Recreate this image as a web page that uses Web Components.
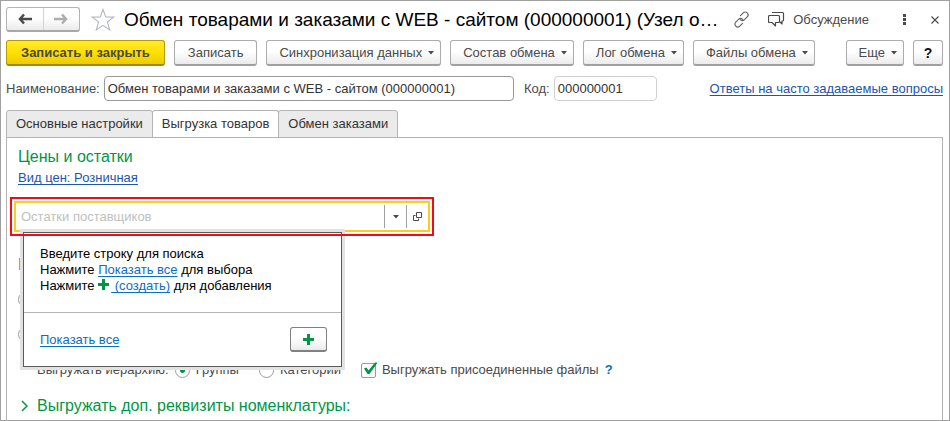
<!DOCTYPE html>
<html lang="ru">
<head>
<meta charset="utf-8">
<title>Обмен товарами и заказами</title>
<style>
  * { box-sizing: border-box; }
  body {
    margin: 0;
    background: #fff;
    color: #4a4a4a;
    font: 13px/16px "Liberation Sans", Arial, sans-serif;
  }
</style>
</head>
<body>
<exchange-form></exchange-form>

<script>
  const base = `
    <style>
      *, :host { box-sizing: border-box; }
      :host { display: block; }
      button, input { font: inherit; color: inherit; margin: 0; }
      svg { display: block; flex: none; }
      a { color: #1c55ae; text-underline-offset: 2px; text-decoration-skip-ink: none; }
    </style>
  `;

  function define(name, html, init) {
    const template = document.createElement('template');
    template.innerHTML = base + html;
    customElements.define(name, class extends HTMLElement {
      constructor() {
        super();
        this.attachShadow({ mode: 'open' });
        this.shadowRoot.appendChild(template.content.cloneNode(true));
      }
      connectedCallback() {
        if (init) init(this, this.shadowRoot);
      }
    });
  }

  const icons = {
    back: '<svg width="14" height="12" viewBox="0 0 14 12"><path d="M6 1.500 2 6l4 4.500M2 6h12" fill="none" stroke="#4a4a4a" stroke-width="2.500"/></svg>',
    forward: '<svg width="14" height="12" viewBox="0 0 14 12"><path d="M8 1.500 12 6l-4 4.500M12 6H0" fill="none" stroke="#adadad" stroke-width="2.500"/></svg>',
    star: '<svg width="24" height="24" viewBox="0 0 24 24"><path d="m12 1.500 2.700 7.400 8 .2-6.300 4.900 2.300 8-6.700-4.600L5.300 22l2.300-8L1.300 9.100l8-.2z" fill="#fff" stroke="#b4b9bf" stroke-width="1.100"/></svg>',
    link: '<svg width="17" height="17" viewBox="0 0 17 17"><g fill="none" stroke="#666" stroke-width="1.200" stroke-linecap="round"><path d="m7.500 4.600 2.700-2.700c1.200-1.200 2.800-1.200 4 0s1.200 2.800 0 4L11.500 8.600c-1.200 1.200-2.900 1.200-4.100 0"/><path d="m9.500 12.400-2.700 2.700c-1.200 1.200-2.800 1.200-4 0s-1.200-2.800 0-4l2.700-2.700c1.200-1.200 2.900-1.200 4.100 0"/></g></svg>',
    chat: '<svg width="17" height="17" viewBox="0 0 17 17"><g fill="#fff" stroke="#4a4a4a" stroke-width="1.200" stroke-linejoin="round"><path d="M4 1.500h10.500q1 0 1 1V9q0 1-1 1H14v3l-3-3"/><path d="M1.500 4.500h9q1 0 1 1v5q0 1-1 1H7.500V15L4 11.500H1.500q-1 0-1-1v-5q0-1 1-1z"/></g></svg>',
    dots: '<svg width="3" height="11" viewBox="0 0 3 11" fill="#4a4a4a"><path d="M0 0h3v3H0zM0 4h3v3H0zM0 8h3v3H0z"/></svg>',
    close: '<svg width="8" height="8" viewBox="0 0 8 8"><path d="m.5.5 7 7m0-7-7 7" stroke="#4a4a4a" stroke-width="1.100"/></svg>',
    caret: '<svg width="6" height="4" viewBox="0 0 6 4"><path d="M0 0h6L3 3.500z" fill="#4a4a4a"/></svg>',
    open: '<svg width="9" height="9" viewBox="0 0 9 9"><path d="M3.500.5h5v5h-5zM2.500 3.500h-2v5h5v-2" fill="none" stroke="#4a4a4a"/></svg>',
    plus: '<svg width="11" height="11" viewBox="0 0 11 11"><path d="M4 0h3v4h4v3H7v4H4V7H0V4h4z" fill="#009646"/></svg>',
    check: '<svg width="14" height="14" viewBox="0 0 14 14"><path d="M1 6.500 3.500 5.500l2 3L12 .5h2v1L6.500 12H4.500z" fill="#009646"/></svg>',
    chevron: '<svg width="7" height="12" viewBox="0 0 7 12"><path d="m1 1 5 5-5 5" fill="none" stroke="#009646" stroke-width="1.500"/></svg>'
  };

  define('app-icon', '<style>:host { display: inline-block; flex: none; } span { display: block; }</style><span></span>', (el, root) => {
    root.querySelector('span').innerHTML = icons[el.getAttribute('name')];
  });

  define('tool-button', `
    <style>
      :host { flex: none; }
      button {
        display: flex;
        align-items: center;
        justify-content: center;
        gap: 6px;
        width: 100%;
        height: 26px;
        padding: 0 13px;
        border: 1px solid #acacac;
        border-bottom: 2px solid #a0a0a0;
        border-radius: 3px;
        background: linear-gradient(#fff 45%, #ebebeb);
        white-space: nowrap;
      }
      app-icon { display: none; }
      :host([menu]) button { padding: 0 6px 0 12px; }
      :host([menu]) app-icon { display: block; }
      :host([primary]) button {
        padding: 0 14px;
        border-color: #b39b00;
        border-bottom-color: #a08b00;
        background: linear-gradient(#ffea30, #ffe000 50%, #edcb00);
        font-weight: bold;
      }
      :host([square]) button { padding: 0; color: #111; font-weight: bold; font-size: 14px; }
    </style>
    <button type="button"><slot></slot><app-icon name="caret"></app-icon></button>
  `);

  define('title-bar', `
    <style>
      header { display: flex; align-items: center; height: 27px; }
      button { display: flex; align-items: center; border: 0; background: none; padding: 0; }
      .history {
        display: flex;
        flex: none;
        width: 74px;
        height: 25px;
        margin-right: 11px;
        border: 1px solid #b4b4b4;
        border-bottom: 2px solid #a8a8a8;
        border-radius: 3px;
        background: linear-gradient(#fff 45%, #ebebeb);
      }
      .history button { flex: 1; justify-content: center; }
      .history button + button { border-left: 1px solid #d2d2d2; }
      h1 {
        flex: 1;
        min-width: 0;
        margin: 0 0 0 9px;
        overflow: hidden;
        color: #000;
        font-size: 19px;
        font-weight: normal;
        line-height: 24px;
        text-overflow: ellipsis;
        white-space: nowrap;
      }
      .tools { display: flex; flex: none; align-items: center; margin-right: 4px; }
      .talk { gap: 8px; margin: 0 34px 0 18px; }
      .close { margin-left: 25px; }
    </style>
    <header>
      <div class="history">
        <button type="button" aria-label="Назад"><app-icon name="back"></app-icon></button>
        <button type="button" aria-label="Вперед"><app-icon name="forward"></app-icon></button>
      </div>
      <button type="button" aria-label="В избранное"><app-icon name="star"></app-icon></button>
      <h1><slot></slot></h1>
      <div class="tools">
        <button type="button" aria-label="Ссылка"><app-icon name="link"></app-icon></button>
        <button type="button" class="talk"><app-icon name="chat"></app-icon>Обсуждение</button>
        <button type="button" aria-label="Меню"><app-icon name="dots"></app-icon></button>
        <button type="button" class="close" aria-label="Закрыть"><app-icon name="close"></app-icon></button>
      </div>
    </header>
  `);

  define('text-field', `
    <style>
      :host { display: flex; align-items: center; gap: 4px; min-width: 0; }
      label { flex: none; }
      input {
        flex: 1;
        min-width: 0;
        height: 25px;
        padding: 0 3px;
        border: 1px solid #989898;
        border-radius: 4px;
        background: #fff;
        color: #333;
        outline: 0;
      }
      :host([muted]) input { border-color: #d2d2d2; }
    </style>
    <label for="field"></label><input id="field" type="text">
  `, (el, root) => {
    root.querySelector('label').textContent = el.getAttribute('label');
    root.querySelector('input').value = el.getAttribute('value');
  });

  define('tab-item', `
    <style>
      :host { flex: none; }
      button {
        width: 100%;
        height: 28px;
        padding: 0 9px;
        border: 1px solid #b4b4b4;
        border-radius: 3px 3px 0 0;
        background: #ebebeb;
        color: #333;
        white-space: nowrap;
      }
      :host([selected]) button { border-bottom-color: #fff; background: #fff; }
    </style>
    <button type="button" role="tab"><slot></slot></button>
  `);

  define('choice-option', `
    <style>
      :host { display: inline-flex; }
      label { display: flex; align-items: center; gap: 6px; white-space: nowrap; }
      .mark { display: grid; width: 15px; height: 15px; }
      .mark > * { grid-area: 1 / 1; }
      input {
        appearance: none;
        width: 15px;
        height: 15px;
        border: 1px solid #9a9a9a;
        border-radius: 50%;
        background: #fff;
      }
      input[type=radio]:checked { background: radial-gradient(circle, #009646 0 2px, #fff 3px); }
      input[type=checkbox] { border-radius: 2px; }
      app-icon { display: none; margin: -1px 0 0 2px; pointer-events: none; }
      input[type=checkbox]:checked + app-icon { display: block; }
    </style>
    <label>
      <span class="mark"><input type="radio"><app-icon name="check"></app-icon></span>
      <slot></slot>
    </label>
  `, (el, root) => {
    const input = root.querySelector('input');
    input.type = el.getAttribute('type') || 'radio';
    input.checked = el.hasAttribute('checked');
    if (el.hasAttribute('name')) input.setAttribute('aria-label', el.getAttribute('name'));
  });

  define('hint-popup', `
    <style>
      :host {
        border: 1px solid #5a5a5a;
        background: #fff;
        box-shadow: 0 0 0 3px #e2e2e2;
        color: #000;
      }
      a { color: #0a6fc2; }
      p { margin: 0; padding: 13px 16px 18px; }
      p app-icon { margin-right: 2px; }
      footer {
        display: flex;
        align-items: center;
        justify-content: space-between;
        padding: 14px 14px 14px 16px;
        border-top: 1px solid #b4b4b4;
      }
      button {
        display: grid;
        place-items: center;
        width: 37px;
        height: 25px;
        padding: 0;
        border: 1px solid #808080;
        border-bottom-width: 2px;
        border-radius: 3px;
        background: linear-gradient(#fff 45%, #ebebeb);
      }
    </style>
    <p>
      Введите строку для поиска<br>
      Нажмите <a href="#all">Показать все</a> для выбора<br>
      Нажмите <app-icon name="plus"></app-icon><a href="#new">&nbsp;(создать)</a> для добавления
    </p>
    <footer>
      <a href="#all">Показать все</a>
      <button type="button" aria-label="Создать"><app-icon name="plus"></app-icon></button>
    </footer>
  `);

  define('lookup-field', `
    <style>
      :host { position: relative; width: 424px; max-width: 100%; padding: 4px; }
      /* highlight frame stays above the popup */
      :host::after {
        content: "";
        position: absolute;
        inset: 0;
        z-index: 2;
        border: 2px solid #f20a14;
        pointer-events: none;
      }
      .box { display: flex; height: 31px; padding: 2px 0; border: 2px solid #facd23; }
      input { flex: 1; min-width: 0; padding: 0 5px; border: 0; outline: 0; background: none; }
      input::placeholder { color: #c0c0c0; opacity: 1; }
      button {
        display: grid;
        place-items: center;
        width: 22px;
        padding: 0;
        border: 0;
        border-left: 1px solid #a0a0a0;
        background: none;
      }
      hint-popup { position: absolute; top: 35px; left: 13px; z-index: 1; width: 319px; }
    </style>
    <div class="box">
      <input type="text" placeholder="Остатки поставщиков" aria-label="Остатки поставщиков">
      <button type="button" aria-label="Выбрать"><app-icon name="caret"></app-icon></button>
      <button type="button" aria-label="Открыть"><app-icon name="open"></app-icon></button>
    </div>
    <hint-popup></hint-popup>
  `);

  define('export-panel', `
    <style>
      :host {
        flex: 1;
        margin-top: -1px;
        padding: 9px 3px 4px;
        border: 1px solid #b4b4b4;
        border-bottom: 0;
      }
      h2 { margin: 0; color: #009646; font-size: 16px; font-weight: normal; line-height: 20px; }
      .intro, .group { padding-left: 8px; }
      .intro { display: grid; justify-items: start; gap: 3px; margin-bottom: 11px; }
      .group { margin-top: 19px; }
      .group > choice-option { display: flex; margin-top: 20px; }
      .group > h2 + choice-option { margin-top: 17px; }
      .row { display: flex; align-items: center; margin: 20px 0 0 19px; }
      .row choice-option { margin-left: 6px; }
      .row choice-option + choice-option { margin-left: 20px; }
      .help { margin-left: 6px; color: #0a6fc2; font-weight: bold; text-decoration: none; }
      .more { display: flex; align-items: center; gap: 9px; margin-top: 18px; padding-left: 3px; }
    </style>
    <div class="intro">
      <h2>Цены и остатки</h2>
      <a href="#price">Вид цен: Розничная</a>
    </div>
    <lookup-field></lookup-field>
    <div class="group">
      <h2>В</h2>
      <choice-option name="Все товары"></choice-option>
      <choice-option name="По отбору"></choice-option>
      <div class="row">
        <span>Выгружать иерархию:</span>
        <choice-option checked>Группы</choice-option>
        <choice-option>Категории</choice-option>
        <choice-option type="checkbox" checked>Выгружать присоединенные файлы</choice-option>
        <a class="help" href="#help">?</a>
      </div>
      <h2 class="more"><app-icon name="chevron"></app-icon>Выгружать доп. реквизиты номенклатуры:</h2>
    </div>
  `);

  define('exchange-form', `
    <style>
      :host {
        display: flex;
        flex-direction: column;
        min-height: 100vh;
        padding: 5px 6px 0 5px;
        border: 1px solid #a0a0a0;
      }
      .commands { display: flex; gap: 9px; margin-top: 7px; }
      .commands .more { margin-left: auto; }
      .fields { display: flex; align-items: center; margin: 10px 0 9px; }
      .name { flex: 0 1 508px; }
      .code { flex: 0 0 133px; margin-left: 10px; }
      .fields a { margin-left: auto; white-space: nowrap; }
      .tabs { display: flex; }
      .tabs tab-item + tab-item { margin-left: -1px; }
      .square { width: 30px; }
    </style>
    <title-bar>Обмен товарами и заказами с WEB - сайтом (000000001) (Узел о…</title-bar>
    <div class="commands">
      <tool-button primary>Записать и закрыть</tool-button>
      <tool-button>Записать</tool-button>
      <tool-button menu>Синхронизация данных</tool-button>
      <tool-button menu>Состав обмена</tool-button>
      <tool-button menu>Лог обмена</tool-button>
      <tool-button menu>Файлы обмена</tool-button>
      <tool-button menu class="more">Еще</tool-button>
      <tool-button square class="square">?</tool-button>
    </div>
    <div class="fields">
      <text-field class="name" label="Наименование:" value="Обмен товарами и заказами с WEB - сайтом (000000001)"></text-field>
      <text-field class="code" muted label="Код:" value="000000001"></text-field>
      <a href="#faq">Ответы на часто задаваемые вопросы</a>
    </div>
    <div class="tabs" role="tablist">
      <tab-item>Основные настройки</tab-item>
      <tab-item selected>Выгрузка товаров</tab-item>
      <tab-item>Обмен заказами</tab-item>
    </div>
    <export-panel></export-panel>
  `);
</script>
</body>
</html>
